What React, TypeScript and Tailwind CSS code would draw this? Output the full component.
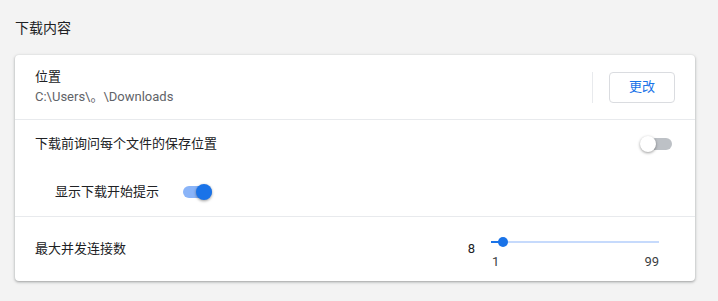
const font = { fontFamily: "Roboto, 'Noto Sans CJK SC', sans-serif" };

function Toggle({ on }: { on: boolean }) {
  return (
    <div className="relative w-[32px] h-[12px] shrink-0">
      <div
        className={
          "absolute left-[3px] right-0 top-0 h-[12px] rounded-full " +
          (on ? "bg-[#8ab4f8]" : "bg-[#bdc1c6]")
        }
      />
      <div
        className={
          "absolute top-[-2px] w-[16px] h-[16px] rounded-full shadow-[0_1px_3px_rgba(0,0,0,0.4)] " +
          (on ? "right-0 bg-[#1a73e8]" : "left-0 bg-white")
        }
      />
    </div>
  );
}

export default function App() {
  return (
    <div
      className="w-[718px] h-[301px] bg-[#f3f3f3] px-[15px] text-[#202124] text-[13px]"
      style={font}
    >
      {/* Section title */}
      <div className="pt-[18px] pb-[17px] text-[14px] leading-[20px]">下载内容</div>

      {/* Card */}
      <div className="w-[680px] bg-white rounded-[4px] shadow-[0_1px_2px_rgba(60,64,67,0.3),0_1px_3px_1px_rgba(60,64,67,0.15)]">
        {/* Location */}
        <div className="h-[65px] flex items-center pl-[20px] pr-[20px] border-b border-[#e8eaed]">
          <div className="flex-1 flex flex-col">
            <span className="leading-[20px]">位置</span>
            <span className="leading-[20px] text-[#5f6368]">C:\Users\。\Downloads</span>
          </div>
          <div className="w-px h-[31px] bg-[#e8eaed] mr-[16px]" />
          <button className="w-[66px] h-[31px] rounded-[4px] border border-[#dadce0] text-[#1a73e8] text-[13px] bg-white">
            更改
          </button>
        </div>

        {/* Ask where to save */}
        <div className="border-b border-[#e8eaed]">
          <div className="h-[48px] flex items-center pl-[20px] pr-[23px]">
            <span className="flex-1 leading-[20px]">下载前询问每个文件的保存位置</span>
            <Toggle on={false} />
          </div>
          <div className="h-[48px] flex items-center pl-[40px] gap-[21px]">
            <span className="leading-[20px]">显示下载开始提示</span>
            <Toggle on={true} />
          </div>
        </div>

        {/* Max connections */}
        <div className="h-[64px] flex items-center pl-[20px] pr-[36px]">
          <span className="flex-1 leading-[20px]">最大并发连接数</span>
          <span className="leading-[20px] mr-[16px]">8</span>
          <div className="self-stretch w-[168px] pt-[19px]">
            <div className="relative h-[12px]">
              <div className="absolute left-0 right-0 top-[5px] h-[2px] bg-[#c6dafc]" />
              <div className="absolute left-0 w-[12px] top-[5px] h-[2px] bg-[#1a73e8]" />
              <div className="absolute left-[7px] top-[1px] w-[10px] h-[10px] rounded-full bg-[#1a73e8]" />
            </div>
            <div className="mt-[6px] flex justify-between leading-[16px] text-[#3c4043]">
              <span className="pl-[1px]">1</span>
              <span>99</span>
            </div>
          </div>
        </div>
      </div>
    </div>
  );
}
